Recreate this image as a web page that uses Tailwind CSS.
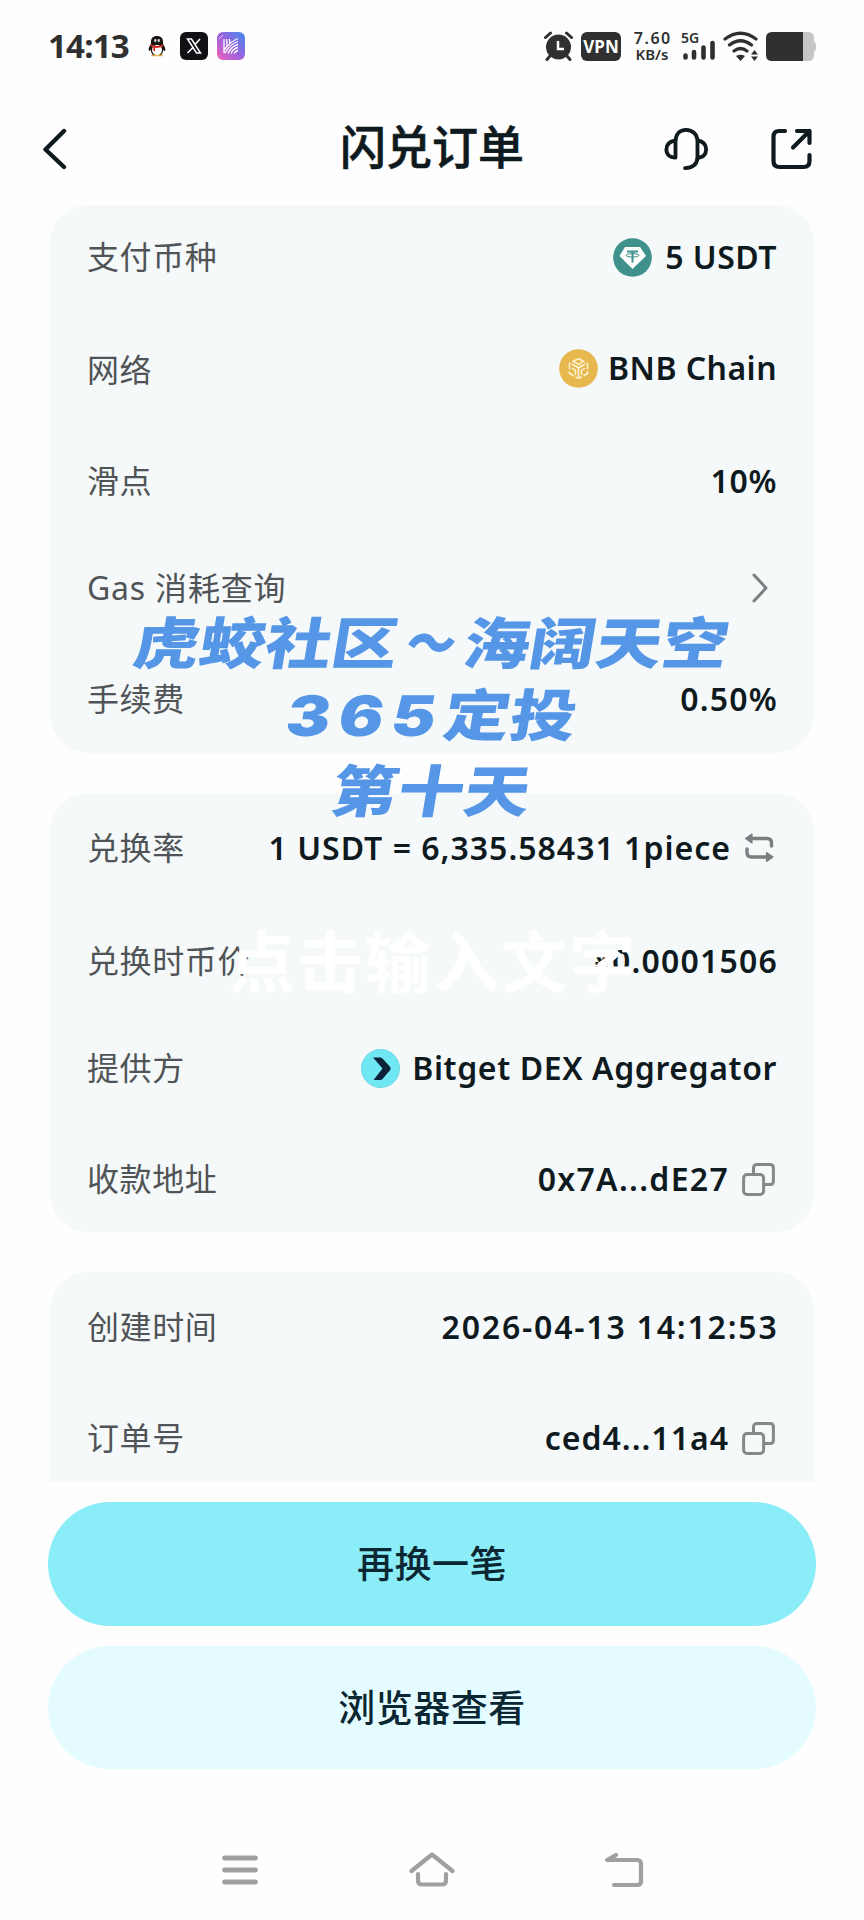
<!DOCTYPE html>
<html lang="zh-CN">
<head>
<meta charset="utf-8">
<title>闪兑订单</title>
<script src="https://cdn.jsdelivr.net/npm/@tailwindcss/browser@4"></script>
</head>
<body class="relative h-[1920px] w-[864px] overflow-hidden bg-[#fefefe] font-['Noto_Sans','Noto_Sans_CJK_SC',sans-serif] text-[32px] leading-[42px] text-[#0f1a1e]">

<!-- status bar -->
<header class="flex h-[92px] items-center pl-[48px] pr-[48px] text-[#303030]">
  <span class="w-[96px] text-[33px] font-bold tracking-[-0.800px]">14:13</span>
  <svg class="ml-[3px] h-[22px] w-[20px] shrink-0" viewBox="0 0 20 22">
    <path d="M4 9C3.500 3 6 1 10 1s6.500 2 6 8c2 3 3 5 2 7-.6.5-1.200-.8-1.700-1.300C16 17.500 15 19 14 20H6c-1-1-2-2.500-2.300-5.300C3.200 15.200 2.600 16.500 2 16c-1-2 0-4 2-7z" fill="#17120f"/>
    <ellipse cx="10" cy="15" rx="5" ry="5.200" fill="#fff"/>
    <ellipse cx="8.300" cy="5.500" rx="1.100" ry="1.700" fill="#ddd"/><ellipse cx="11.700" cy="5.500" rx="1.100" ry="1.700" fill="#ddd"/>
    <path d="M3.500 9.300q6.500 3.200 13 0v2q-4 2-8.500 1.600v3H6.300v-3.600l-2.800-1z" fill="#d42b2b"/>
    <path d="M5 20.500h4M11 20.500h4" stroke="#e9a33a" stroke-width="1.500" stroke-linecap="round"/>
  </svg>
  <svg class="ml-[13px] h-[28px] w-[28px] shrink-0" viewBox="0 0 28 28">
    <rect width="28" height="28" rx="6" fill="#101114"/>
    <path d="M7.500 7h4l9 14h-4z" fill="none" stroke="#fff" stroke-width="1.500"/>
    <path d="M20 7l-5.500 6M13 15.500L7.500 21" stroke="#fff" stroke-width="1.600"/>
  </svg>
  <svg class="ml-[9px] h-[28px] w-[28px] shrink-0" viewBox="0 0 28 28">
    <defs><linearGradient id="app" x1="0" y1="1" x2="1" y2="0"><stop offset="0" stop-color="#f062b8"/><stop offset=".5" stop-color="#9a62de"/><stop offset="1" stop-color="#3f8cf0"/></linearGradient></defs>
    <rect width="28" height="28" rx="6" fill="url(#app)"/>
    <g fill="none" stroke="#fff" stroke-width="1.300"><path d="M7 7v14M9.800 7v6.500M12.600 7v5M21 6.500Q13.500 9.500 7 18M21 9.500Q13 12 8 21M21 12.500Q14.500 14 11 21.500M21 15.500q-5 1-7 6M21 18.500q-2.500.5-4 3"/><path d="M2 7l4-4" stroke-width="1" opacity=".7"/></g>
  </svg>
  <svg class="ml-auto h-[30px] w-[29px] shrink-0" viewBox="0 0 29 30">
    <circle cx="14.500" cy="16" r="12.500" fill="#303030"/>
    <path d="M1.500 6.500L6.500 2M27.500 6.500L22.500 2M6 25l-3 3.500M23 25l3 3.500" stroke="#303030" stroke-width="3" stroke-linecap="round"/>
    <path d="M14 10v8h6" fill="none" stroke="#fff" stroke-width="2.500"/>
  </svg>
  <span class="ml-[8px] flex h-[29px] w-[40px] items-center justify-center rounded-[6px] bg-[#303030] text-[17px] font-bold leading-none text-white">VPN</span>
  <span class="ml-[11px] flex w-[40px] shrink-0 flex-col text-center font-semibold leading-[16px]"><span class="-mr-[1.500px] text-[16px] tracking-[1.500px]">7.60</span><span class="text-[15px]">KB/s</span></span>
  <span class="ml-[9px] flex h-[30px] w-[34px] shrink-0 flex-col">
    <span class="h-[9px] text-[14px] font-semibold leading-[13px]">5G</span>
    <svg class="h-[21px] w-[34px]" viewBox="0 0 34 21"><path d="M4.500 15.500v2M13 12v5.500M22.500 7.500v10M31.500 3v14.500" stroke="#303030" stroke-width="4.600" stroke-linecap="round"/></svg>
  </span>
  <svg class="ml-[8px] h-[30px] w-[36px] shrink-0" viewBox="0 0 36 30">
    <g fill="none" stroke="#303030" stroke-width="3.200" stroke-linecap="round"><path d="M2 8q15.500-11.500 31 0M6.500 14q11-8.500 22 0M11 20q6.500-5 13 0"/></g>
    <path d="M13 25q4.500-2.500 9 0l-4.500 5zM28 23.500l3.500-4.500 3.500 4.500zM28 25.500l3.500 4.500 3.500-4.500z" fill="#303030"/>
  </svg>
  <svg class="ml-[7px] h-[29px] w-[50px] shrink-0" viewBox="0 0 50 29">
    <path d="M37 0h5q6 0 6 6v3q2 1 2 5.500T48 20v3q0 6-6 6h-5z" fill="#c6c6c6"/>
    <path d="M37 0H6Q0 0 0 6v17q0 6 6 6h31z" fill="#303030"/>
  </svg>
</header>

<!-- title bar -->
<nav class="grid h-[113px] grid-cols-[340px_184px_1fr] items-center">
  <svg class="ml-[42px] h-[42px] w-[25px]" viewBox="0 0 25 42"><path d="M22 3L3.500 21.500 22 39" fill="none" stroke="#0f1a1e" stroke-width="4.400" stroke-linecap="round" stroke-linejoin="round"/></svg>
  <h1 class="mb-[5px] whitespace-nowrap text-center text-[46px] font-medium [-webkit-text-stroke:0.600px_#0f1a1e]">闪兑订单</h1>
  <div class="flex items-center justify-end pr-[51px]">
    <svg class="h-[44px] w-[44px]" viewBox="0 0 46 46"><path d="M12 32V15.500C12 7.500 16.500 3 23 3s12 4.500 12 12.500V31c0 8-4.500 11.500-13 12M12 14C6 15 2.500 18.500 2.500 23.500S6 32 12 32M35 14c6 1 9 4.500 9 9.500S41 32 35 32" fill="none" stroke="#0f1a1e" stroke-width="4" stroke-linecap="round" stroke-linejoin="round"/></svg>
    <svg class="ml-[63px] h-[42px] w-[42px]" viewBox="0 0 42 42"><path d="M14 3H8Q2.500 3 2.500 9v24q0 6 6 6h24q6 0 6-6v-6M26 3h12.500v12M38.500 3L22 19.500" fill="none" stroke="#0f1a1e" stroke-width="4.200" stroke-linecap="round" stroke-linejoin="round"/></svg>
  </div>
</nav>

<main class="flex flex-col px-[50px]">
  <section class="h-[548px] rounded-[38px] bg-[#f5f9fa] px-[37px] pt-[31px]">
    <div class="flex h-[42px] items-center justify-between">
      <span class="tracking-[0.600px] text-[#505456]">支付币种</span>
      <span class="flex items-center font-semibold tracking-[0.500px]">
        <svg class="mr-[13px] h-[39px] w-[39px]" viewBox="0 0 39 39"><circle cx="19.500" cy="19.500" r="19.300" fill="#3f918c"/><path d="M12 9h15l6 9-13.500 13L6.500 18z" fill="#fff"/><path d="M14 13.500h11M19.500 13.500v11" stroke="#3f918c" stroke-width="2"/><ellipse cx="19.500" cy="17.300" rx="6.500" ry="1.700" fill="none" stroke="#3f918c"/></svg>
        5 USDT</span>
    </div>
    <div class="mt-[69px] flex h-[42px] items-center justify-between">
      <span class="mt-[4px] tracking-[0.600px] text-[#505456]">网络</span>
      <span class="flex items-center font-semibold tracking-[0.450px]">
        <svg class="mr-[10px] h-[39px] w-[39px]" viewBox="0 0 39 39"><circle cx="19.500" cy="19.500" r="19.300" fill="#e6b84d"/><g fill="none" stroke="#fff5d8" stroke-width="1.500"><path d="M19.500 9.500l9 5v10l-9 5-9-5v-10z" stroke-dasharray="7 2"/><path d="M13 15l6.500 4 6.500-4M19.500 19v9M15 12.500l4.500 3 4.500-3M13 19l3.500 2.500V26M26 19l-3.500 2.500V26"/></g></svg>
        BNB Chain</span>
    </div>
    <div class="mt-[71px] flex h-[42px] items-center justify-between">
      <span class="tracking-[0.600px] text-[#505456]">滑点</span><span class="font-semibold tracking-[0.600px]">10%</span>
    </div>
    <div class="mt-[65px] flex h-[42px] items-center justify-between">
      <span class="tracking-[0.800px] text-[#505456]">Gas 消耗查询</span>
      <svg class="mr-[8px] h-[30px] w-[18px]" viewBox="0 0 18 30"><path d="M3 2l12 13L3 28" fill="none" stroke="#7b7f80" stroke-width="3" stroke-linecap="round" stroke-linejoin="round"/></svg>
    </div>
    <div class="mt-[69px] flex h-[42px] items-center justify-between">
      <span class="tracking-[0.600px] text-[#505456]">手续费</span><span class="-mr-[1px] font-semibold tracking-[1.200px]">0.50%</span>
    </div>
  </section>

  <section class="mt-[40px] h-[439px] rounded-[38px] bg-[#f5f9fa] px-[37px] pt-[34px]">
    <div class="flex h-[42px] items-center justify-between">
      <span class="tracking-[0.600px] text-[#505456]">兑换率</span>
      <span class="flex items-center font-semibold tracking-[1px]">1 USDT = 6,335.58431 1piece
        <svg class="ml-[13px] mr-[3px] h-[30px] w-[30px]" viewBox="0 0 30 30"><path d="M7 5.500h16q4.500 0 4.500 4.500v3M3 16v3.500q0 4.500 4.500 4.500H24" fill="none" stroke="#7b7f80" stroke-width="3.400" stroke-linecap="round"/><path d="M8 1v9L1.500 5.500zM22.500 19.500v9l6.500-4.500z" fill="#7b7f80" stroke="#7b7f80" stroke-width="1.200" stroke-linejoin="round"/></svg></span>
    </div>
    <div class="mt-[71px] flex h-[42px] items-center justify-between">
      <span class="tracking-[0.600px] text-[#505456]">兑换时币价</span><span class="-mr-[1px] font-semibold tracking-[1.200px]">¥0.0001506</span>
    </div>
    <div class="mt-[65px] flex h-[42px] items-center justify-between">
      <span class="tracking-[0.600px] text-[#505456]">提供方</span>
      <span class="flex items-center font-semibold tracking-[0.600px]">
        <svg class="mr-[12px] h-[39px] w-[39px]" viewBox="0 0 39 39"><circle cx="19.500" cy="19.500" r="19" fill="#70e8f4" stroke="#5cd0dc" stroke-width=".8"/><path d="M12 8.500h7q1.500 0 2.500 1l7.500 8.300q1.500 1.700 0 3.400L21.500 30q-1 1-2.500 1h-6.500l9-11.500z" fill="#0b2238"/></svg>
        Bitget DEX Aggregator</span>
    </div>
    <div class="mt-[69px] flex h-[42px] items-center justify-between">
      <span class="tracking-[0.600px] text-[#505456]">收款地址</span>
      <span class="flex items-center font-semibold tracking-[1.300px]">0x7A...dE27
        <svg class="ml-[13px] mr-[2px] h-[33px] w-[33px]" viewBox="0 0 33 33"><g fill="none" stroke="#858989" stroke-width="3"><rect x="1.600" y="11.500" width="20" height="20" rx="3.500"/><path d="M11.500 11.500V5q0-3.400 3.400-3.400H28q3.400 0 3.400 3.400v13.200q0 3.400-3.400 3.400h-6.400"/></g></svg></span>
    </div>
  </section>

  <section class="mt-[40px] h-[210px] rounded-t-[38px] bg-[#f5f9fa] px-[37px] pt-[34px]">
    <div class="flex h-[42px] items-center justify-between">
      <span class="tracking-[0.600px] text-[#505456]">创建时间</span><span class="-mr-[1.500px] font-semibold tracking-[1.800px]">2026-04-13 14:12:53</span>
    </div>
    <div class="mt-[69px] flex h-[42px] items-center justify-between">
      <span class="tracking-[0.600px] text-[#505456]">订单号</span>
      <span class="flex items-center font-semibold tracking-[1px]">ced4...11a4
        <svg class="ml-[13px] mr-[2px] h-[33px] w-[33px]" viewBox="0 0 33 33"><g fill="none" stroke="#858989" stroke-width="3"><rect x="1.600" y="11.500" width="20" height="20" rx="3.500"/><path d="M11.500 11.500V5q0-3.400 3.400-3.400H28q3.400 0 3.400 3.400v13.200q0 3.400-3.400 3.400h-6.400"/></g></svg></span>
    </div>
  </section>

  <div class="-mx-[2px] mt-[20px] flex flex-col gap-[20px] text-[37px] font-medium tracking-[0.500px] text-[#0b2733]">
    <button class="h-[124px] rounded-full bg-[#8bedf8]">再换一笔</button>
    <button class="h-[123px] rounded-full bg-[#e4fcff]">浏览器查看</button>
  </div>
</main>

<!-- system navigation -->
<footer class="mt-[80px] flex h-[42px] items-center">
  <svg class="ml-[222px] h-[30px] w-[36px]" viewBox="0 0 36 30"><path d="M2.500 3h31M2.500 15h31M2.500 27h31" stroke="#a0a0a0" stroke-width="4.800" stroke-linecap="round"/></svg>
  <svg class="ml-[151px] h-[36px] w-[46px]" viewBox="0 0 46 36"><path d="M2.500 19L23 2.500 43.500 19M9 22v6.500q0 4 4 4h20q4 0 4-4V22" fill="none" stroke="#a0a0a0" stroke-width="4.200" stroke-linecap="round" stroke-linejoin="round"/></svg>
  <svg class="ml-[149px] h-[36px] w-[40px]" viewBox="0 0 40 36"><path d="M12 3L3 8h30q4 0 4 4v17q0 4-4 4H10" fill="none" stroke="#a0a0a0" stroke-width="4.200" stroke-linecap="round" stroke-linejoin="round"/><path d="M12 3L3 8h8z" fill="#a0a0a0"/></svg>
</footer>

<!-- captions laid over the order -->
<div class="absolute left-0 top-[604px] w-[864px] whitespace-nowrap text-center font-['Noto_Sans_CJK_SC',sans-serif] text-[56px] font-black leading-[71.600px] text-[#5596e6]">
  <p class="-skew-x-8 scale-x-[1.18]">虎蛟社区<span class="inline-block scale-x-75">～</span>海阔天空</p>
  <p class="-skew-x-8 scale-x-[1.18]"><span class="font-['Inter'] tracking-[7px]">365</span>定投</p>
  <p class="-skew-x-8 scale-x-[1.18]">第十天</p>
</div>
<div class="absolute left-[229px] top-[916px] whitespace-nowrap font-['Noto_Sans_CJK_SC',sans-serif] text-[66px] font-bold leading-[84px] tracking-[2px] text-white">点击输入文字</div>
</body>
</html>
